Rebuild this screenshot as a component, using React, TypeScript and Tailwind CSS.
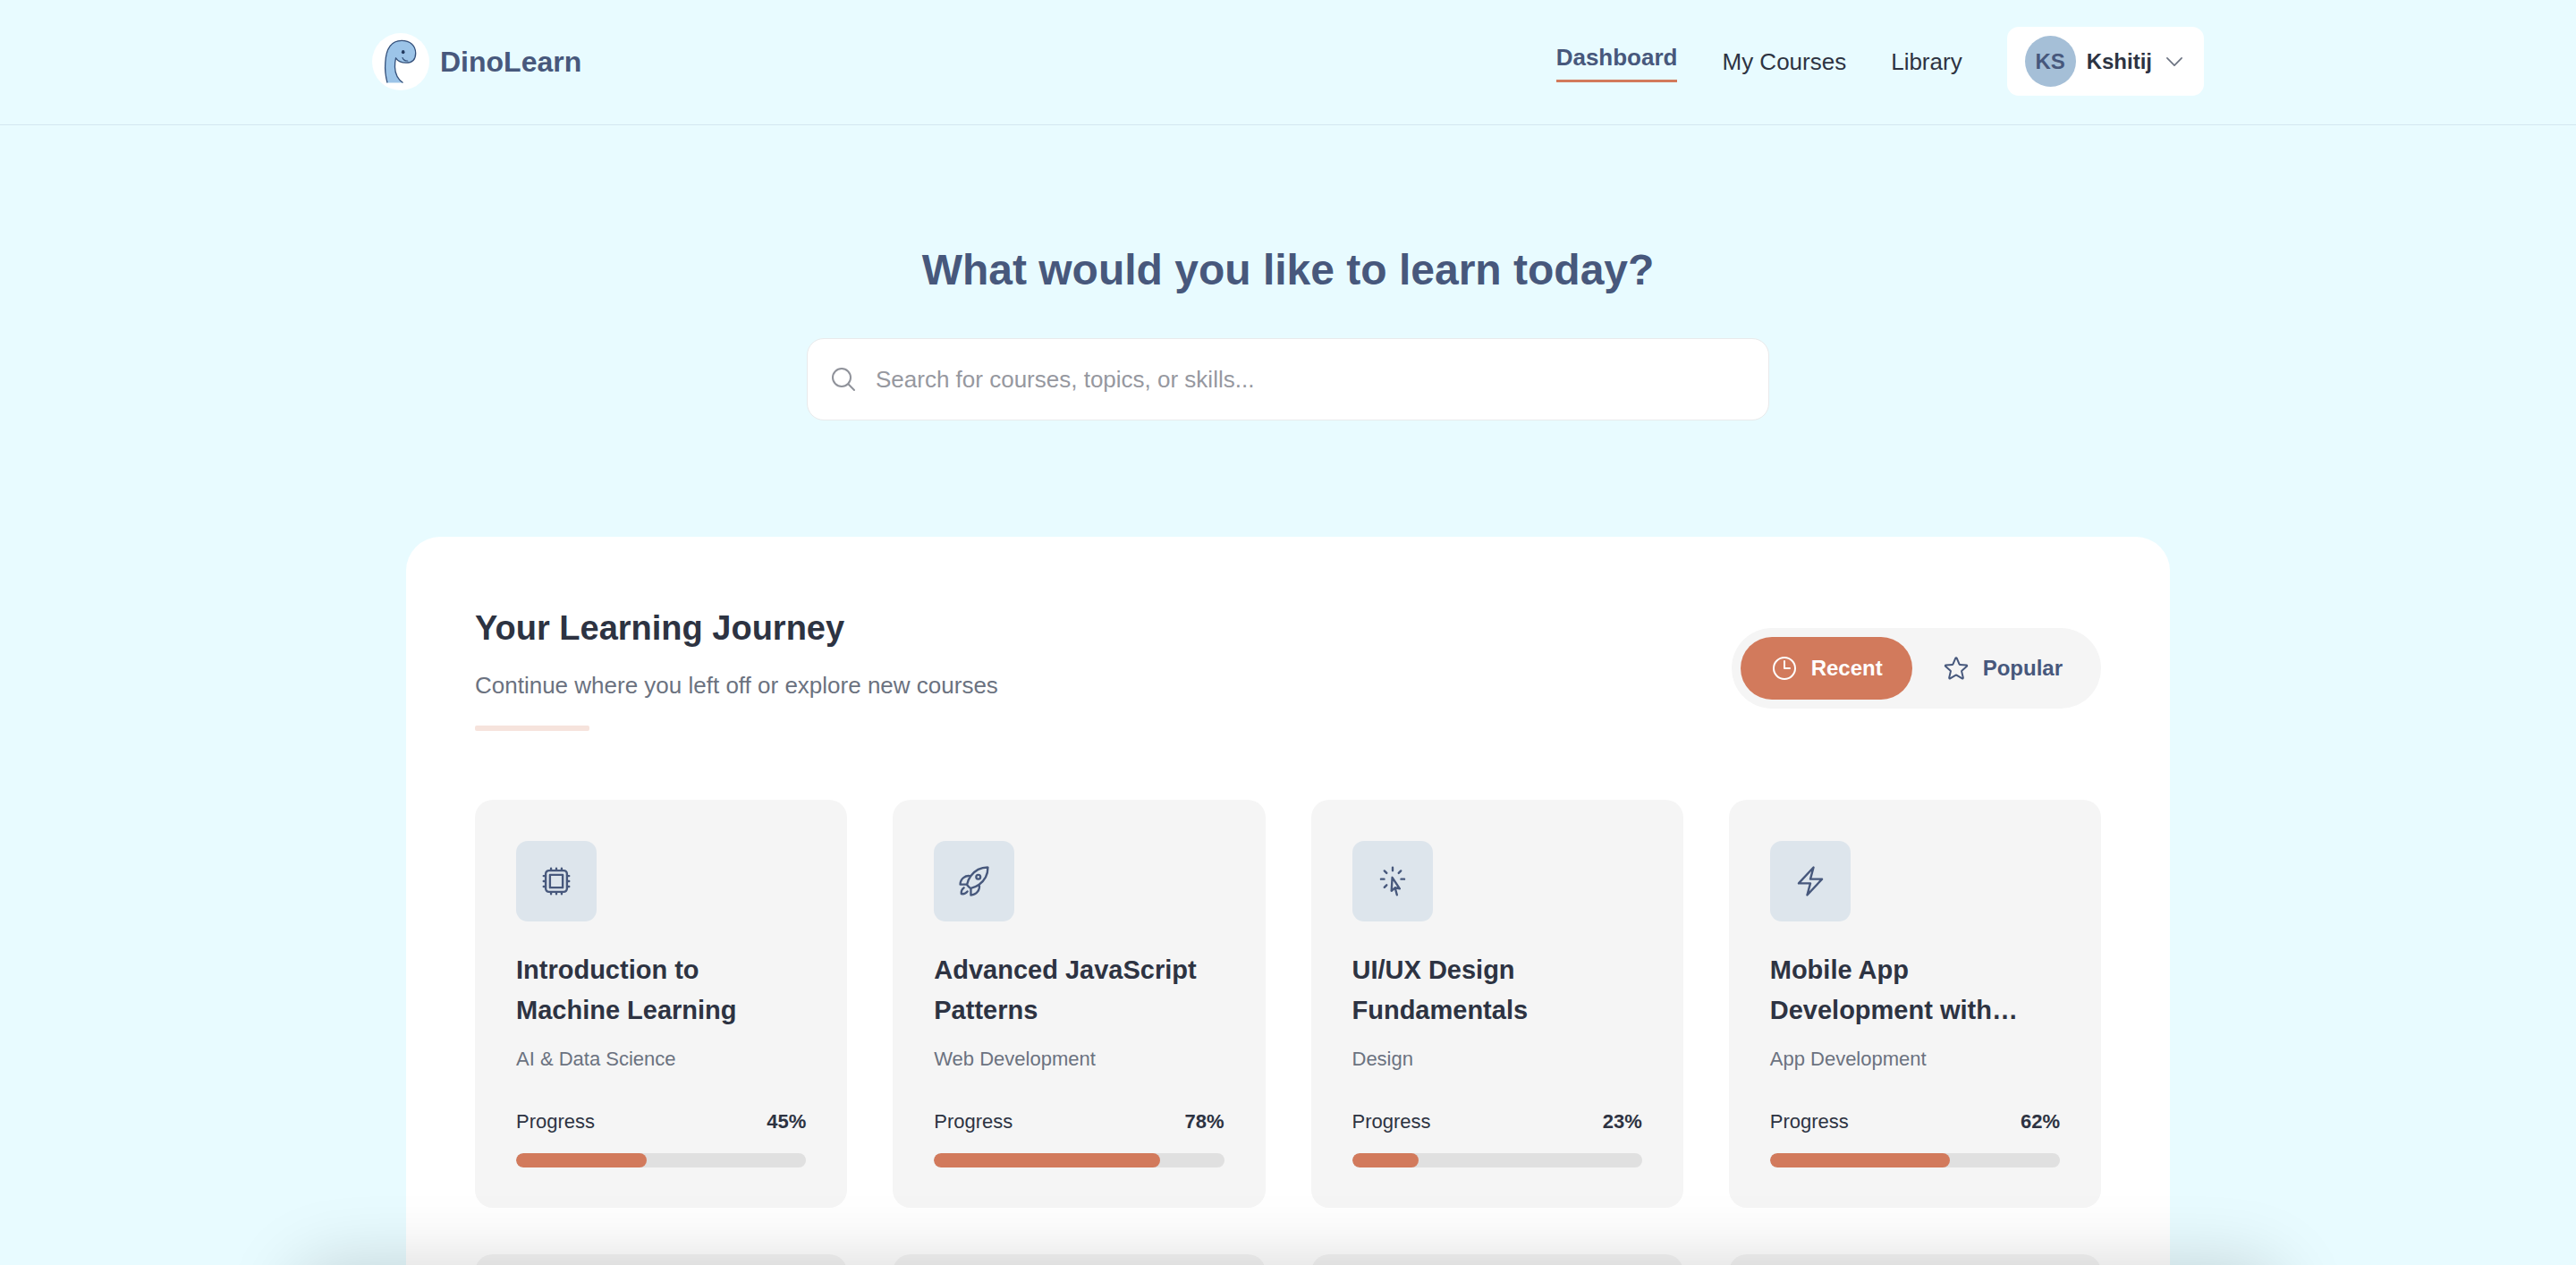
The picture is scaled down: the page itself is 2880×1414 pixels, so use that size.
import { useState } from "react";
import type { IconType } from "react-icons";
import {
	HiOutlineBolt,
	HiOutlineChevronDown,
	HiOutlineClock,
	HiOutlineCpuChip,
	HiOutlineCursorArrowRays,
	HiOutlineMagnifyingGlass,
	HiOutlineRocketLaunch,
	HiOutlineStar,
} from "react-icons/hi2";

interface Course {
	title: string;
	category: string;
	progress: number;
	icon: IconType;
}

const courses: Course[] = [
	{
		title: "Introduction to Machine Learning",
		category: "AI & Data Science",
		progress: 45,
		icon: HiOutlineCpuChip,
	},
	{
		title: "Advanced JavaScript Patterns",
		category: "Web Development",
		progress: 78,
		icon: HiOutlineRocketLaunch,
	},
	{
		title: "UI/UX Design Fundamentals",
		category: "Design",
		progress: 23,
		icon: HiOutlineCursorArrowRays,
	},
	{
		title: "Mobile App Development with…",
		category: "App Development",
		progress: 62,
		icon: HiOutlineBolt,
	},
];

function DinoLogo() {
	return (
		<svg viewBox="0 0 64 64" className="size-16 rounded-full bg-white" aria-hidden="true">
			<path
				d="M17 55.5C15 48 14.2 40 14.8 33C15.5 18 21 8.500 33 8.300C42.500 8.300 48.700 14 48.700 22.500C48.700 29.500 44.500 33.200 38 33.200C33 33.200 29 31.500 26.500 27.800C25.800 31 25.400 34 25.500 38C25.800 46 28.500 51.500 34.500 55.500Z"
				fill="#9cc4e8"
			/>
			<path
				d="M17 55.5C15 48 14.2 40 14.8 33C15.5 18 21 8.500 33 8.300C42.500 8.300 48.700 14 48.700 22.500C48.700 29.500 44.500 33.200 38 33.200C33 33.200 29 31.500 26.500 27.800C25.800 31 25.400 34 25.500 38C25.800 46 28.500 51.500 34.500 55.500"
				fill="none"
				stroke="#34507a"
				strokeWidth="1.3"
				strokeLinejoin="round"
			/>
			<ellipse cx="34.7" cy="21.2" rx="1.8" ry="2.1" fill="#233b60" />
			<path d="M34 27.5C35 30 37 31.2 39.7 31" fill="none" stroke="#34507a" strokeWidth="1.2" strokeLinecap="round" />
		</svg>
	);
}

function Header() {
	return (
		<header className="border-b border-[#d3e6f0]">
			<div className="mx-auto flex max-w-[2048px] items-center justify-between pt-[30px] pb-8">
				<a href="#" className="flex items-center gap-3">
					<DinoLogo />
					<span className="text-[32px] leading-[38px] font-bold text-[#47587c]">DinoLearn</span>
				</a>
				<div className="flex items-center gap-[50px]">
					<nav className="flex items-center gap-[50px]">
						<a href="#" className="border-b-3 border-[#d27a5c] pb-1.5 font-bold text-[#47587c]">
							Dashboard
						</a>
						<a href="#">My Courses</a>
						<a href="#">Library</a>
					</nav>
					<button
						type="button"
						className="flex items-center gap-3 rounded-[13px] bg-white px-5 py-2.5 text-[24px] font-semibold"
					>
						<span className="flex size-[57px] items-center justify-center rounded-full bg-[#a5bfd7] text-[#47587c]">
							KS
						</span>
						Kshitij
						<HiOutlineChevronDown className="size-[26px] text-[#6b7280]" />
					</button>
				</div>
			</div>
		</header>
	);
}

function Hero() {
	return (
		<section className="mx-auto max-w-[1076px] pt-[130px] pb-[130px]">
			<h1 className="mb-11 text-center text-[48px] leading-[64px] font-bold text-[#47587c]">
				What would you like to learn today?
			</h1>
			<label className="flex h-[92px] items-center gap-5 rounded-[19px] border border-[#e9eaeb] bg-white px-6">
				<HiOutlineMagnifyingGlass className="size-8 text-[#8f929a]" />
				<input
					type="search"
					aria-label="Search courses"
					placeholder="Search for courses, topics, or skills..."
					className="min-w-0 flex-1 bg-transparent outline-none placeholder:text-[#96989f]"
				/>
			</label>
		</section>
	);
}

function CourseCard({ course }: { course: Course }) {
	const Icon = course.icon;

	return (
		<article className="rounded-[20px] bg-[#f5f5f5] px-[46px] pt-[46px] pb-[45px]">
			<div className="flex size-[90px] items-center justify-center rounded-[13px] bg-[#dde5ec]">
				<Icon className="size-[38px] text-[#47587c]" />
			</div>
			<h3 className="mt-8 line-clamp-2 h-[90px] text-[29px] leading-[45px] font-bold">{course.title}</h3>
			<p className="mt-4 text-[22px] leading-8 text-[#6b7280]">{course.category}</p>
			<div className="mt-[38px] flex justify-between text-[22px] leading-8">
				<span className="font-medium">Progress</span>
				<span className="font-bold">{course.progress}%</span>
			</div>
			<div className="mt-[19px] h-4 overflow-hidden rounded-full bg-[#e0e0e0]">
				<div className="h-full rounded-full bg-[#d27a5c]" style={{ width: `${course.progress}%` }} />
			</div>
		</article>
	);
}

const tabs = [
	{ name: "Recent", icon: HiOutlineClock },
	{ name: "Popular", icon: HiOutlineStar },
];

function Journey() {
	const [active, setActive] = useState("Recent");

	return (
		<section className="mx-auto max-w-[1972px] rounded-t-[38px] bg-white p-[77px]">
			<div className="mb-[77px] flex items-center justify-between">
				<div>
					<h2 className="text-[38px] leading-[51px] font-bold">Your Learning Journey</h2>
					<p className="mt-[19px] text-[#6b7280]">Continue where you left off or explore new courses</p>
					<div className="mt-[26px] h-1.5 w-32 rounded-xs bg-[#f6e3dc]" />
				</div>
				<div className="flex rounded-full bg-[#f5f5f5] p-2.5">
					{tabs.map(({ name, icon: Icon }) => (
						<button
							key={name}
							type="button"
							onClick={() => setActive(name)}
							className={`flex items-center gap-[14px] rounded-full px-[33px] py-4 text-[24px] font-semibold ${
								active === name ? "bg-[#d27a5c] text-white" : "text-[#47587c]"
							}`}
						>
							<Icon className="size-8" />
							{name}
						</button>
					))}
				</div>
			</div>
			<div className="grid grid-cols-4 gap-x-[51px] gap-y-[52px]">
				{courses.map((course) => (
					<CourseCard key={course.title} course={course} />
				))}
				{courses.map((course) => (
					<CourseCard key={`${course.title}-next`} course={course} />
				))}
			</div>
		</section>
	);
}

export default function App() {
	return (
		<div className="relative h-screen overflow-hidden bg-[#e8fbff] font-['Liberation_Sans',Arial,sans-serif] text-[26px] leading-[38px] text-[#2d3342]">
			<Header />
			<main>
				<Hero />
				<Journey />
			</main>
			{/* soft shadow rising from the bottom edge */}
			<div className="pointer-events-none absolute inset-x-[330px] top-full h-40 rounded-[40px] shadow-[0_0_80px_rgba(0,0,0,0.17)]" />
		</div>
	);
}
